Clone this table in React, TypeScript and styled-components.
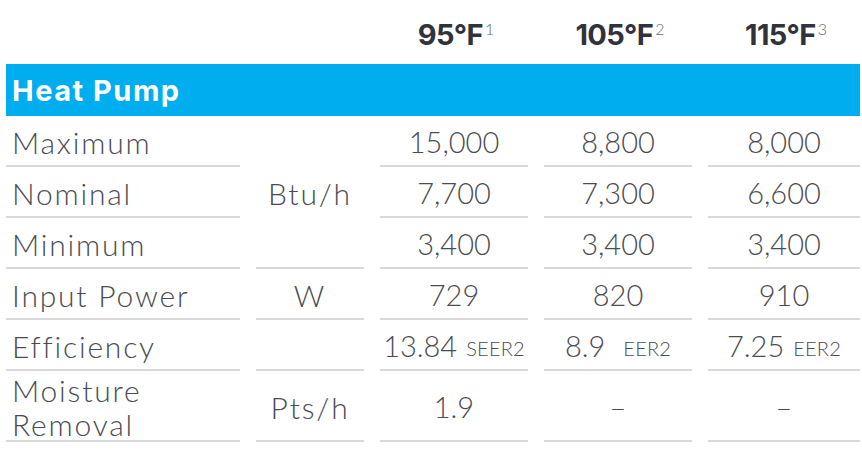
import React from "react";
import styled, { createGlobalStyle } from "styled-components";

const GlobalStyle = createGlobalStyle`
  html, body {
    margin: 0;
    padding: 0;
    background: #ffffff;
  }
  body {
    font-family: Lato, "Liberation Sans", sans-serif;
  }
`;

const Table = styled.div`
  display: grid;
  grid-template-columns: 234px 108px 148px 148px 152px;
  grid-template-rows: 64px 52px repeat(5, 51px) 71px;
  column-gap: 16px;
  margin-left: 6px;
  width: 856px;
`;

const Blank = styled.div``;

const TempHead = styled.div`
  display: flex;
  justify-content: center;
  align-items: flex-start;
  padding-top: 20px;
  padding-left: 4px;
  font-family: Inter, "Liberation Sans", sans-serif;
  font-size: 29px;
  line-height: 29px;
  font-weight: 700;
  color: #30333b;
  letter-spacing: -0.6px;
`;

const Sup = styled.span`
  font-family: Lato, "Liberation Sans", sans-serif;
  font-size: 16px;
  line-height: 16px;
  font-weight: 300;
  letter-spacing: 0;
  color: #6a6a70;
  margin-left: 2px;
  margin-top: 1px;
`;

const SectionBar = styled.div`
  grid-column: 1 / -1;
  background: #00adee;
  display: flex;
  align-items: center;
  padding-left: 6px;
  padding-top: 1px;
  font-family: Inter, "Liberation Sans", sans-serif;
  font-size: 29px;
  font-weight: 700;
  color: #ffffff;
  letter-spacing: 1.5px;
`;

const Cell = styled.div<{ $kind: "label" | "unit" | "value"; $span?: number }>`
  box-sizing: border-box;
  display: flex;
  align-items: center;
  justify-content: ${(p) => (p.$kind === "label" ? "flex-start" : "center")};
  padding-left: ${(p) => (p.$kind === "label" ? "6px" : "0")};
  padding-top: 3px;
  border-bottom: 2px solid #d9d9d9;
  font-size: ${(p) => (p.$kind === "value" ? "29px" : "30px")};
  line-height: 34px;
  font-weight: 300;
  letter-spacing: ${(p) => (p.$kind === "value" ? "0" : "1.8px")};
  color: #4b4c52;
  ${(p) => (p.$span ? `grid-row: span ${p.$span};` : "")}
`;

const Suffix = styled.span<{ $gap: number }>`
  font-size: 20px;
  letter-spacing: 0.2px;
  margin-left: ${(p) => p.$gap}px;
  align-self: center;
  padding-top: 3px;
`;

type Row = {
  label: React.ReactNode;
  unit?: { text: string; span?: number } | null;
  values: React.ReactNode[];
};

const eff = (v: string, s: string, gap: number) => (
  <>
    {v}
    <Suffix $gap={gap}>{s}</Suffix>
  </>
);

const rows: Row[] = [
  { label: "Maximum", unit: { text: "Btu/h", span: 3 }, values: ["15,000", "8,800", "8,000"] },
  { label: "Nominal", values: ["7,700", "7,300", "6,600"] },
  { label: "Minimum", values: ["3,400", "3,400", "3,400"] },
  { label: "Input Power", unit: { text: "W" }, values: ["729", "820", "910"] },
  {
    label: "Efficiency",
    unit: { text: "" },
    values: [eff("13.84", "SEER2", 9), eff("8.9", "EER2", 18), eff("7.25", "EER2", 9)],
  },
  {
    label: (
      <>
        Moisture
        <br />
        Removal
      </>
    ),
    unit: { text: "Pts/h" },
    values: ["1.9", "–", "–"],
  },
];

export default function App() {
  return (
    <>
      <GlobalStyle />
      <Table>
        <Blank />
        <Blank />
        <TempHead>
          95°F<Sup>1</Sup>
        </TempHead>
        <TempHead>
          105°F<Sup>2</Sup>
        </TempHead>
        <TempHead>
          115°F<Sup>3</Sup>
        </TempHead>
        <SectionBar>Heat Pump</SectionBar>
        {rows.map((r, i) => (
          <React.Fragment key={i}>
            <Cell $kind="label">
              <span>{r.label}</span>
            </Cell>
            {r.unit ? (
              <Cell $kind="unit" $span={r.unit.span}>
                {r.unit.text}
              </Cell>
            ) : null}
            {r.values.map((v, j) => (
              <Cell $kind="value" key={j}>
                {v}
              </Cell>
            ))}
          </React.Fragment>
        ))}
      </Table>
    </>
  );
}
